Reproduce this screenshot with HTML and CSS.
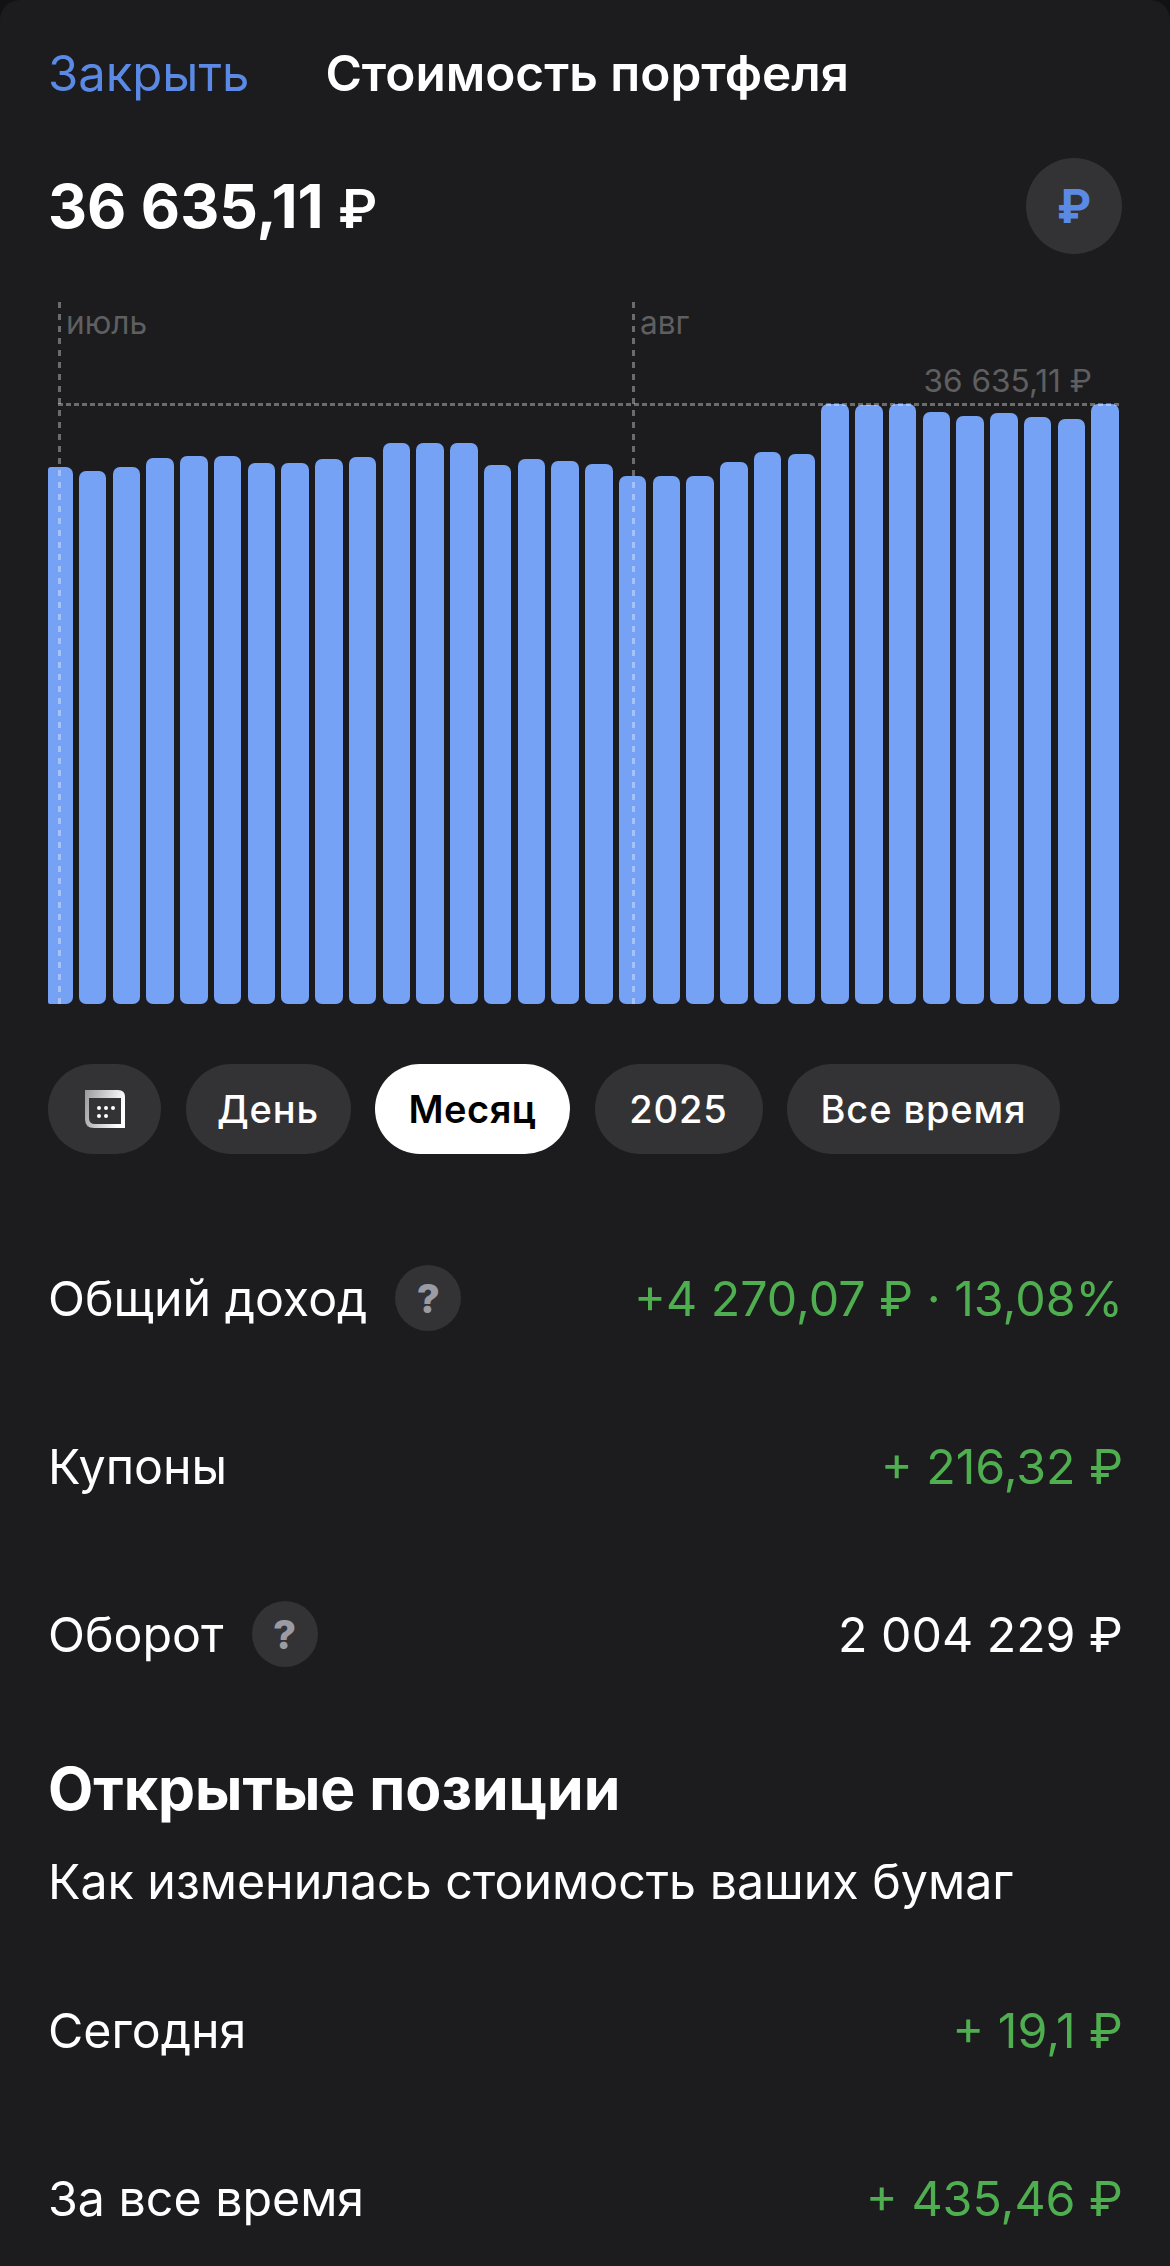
FILE: index.html
```html
<!DOCTYPE html>
<html lang="ru">
<head>
  <meta charset="UTF-8" />
  <title>Стоимость портфеля</title>
  <link rel="stylesheet" href="styles.css">
</head>
<body>
  <div class="sheet">
    <div class="topbar">
      <span class="close">Закрыть</span>
      <span class="title">Стоимость портфеля</span>
    </div>

    <div class="total">
      <span class="totalValue">36 635,11 <span class="totalSign">₽</span></span>
      <span class="currency">₽</span>
    </div>

    <div class="chart">
      <div class="bars">
        <div class="bar" style="height: 537px"></div>
        <div class="bar" style="height: 533px"></div>
        <div class="bar" style="height: 537px"></div>
        <div class="bar" style="height: 546px"></div>
        <div class="bar" style="height: 548px"></div>
        <div class="bar" style="height: 548px"></div>
        <div class="bar" style="height: 541px"></div>
        <div class="bar" style="height: 541px"></div>
        <div class="bar" style="height: 545px"></div>
        <div class="bar" style="height: 547px"></div>
        <div class="bar" style="height: 561px"></div>
        <div class="bar" style="height: 561px"></div>
        <div class="bar" style="height: 561px"></div>
        <div class="bar" style="height: 539px"></div>
        <div class="bar" style="height: 545px"></div>
        <div class="bar" style="height: 543px"></div>
        <div class="bar" style="height: 540px"></div>
        <div class="bar" style="height: 528px"></div>
        <div class="bar" style="height: 528px"></div>
        <div class="bar" style="height: 528px"></div>
        <div class="bar" style="height: 542px"></div>
        <div class="bar" style="height: 552px"></div>
        <div class="bar" style="height: 550px"></div>
        <div class="bar" style="height: 600px"></div>
        <div class="bar" style="height: 599px"></div>
        <div class="bar" style="height: 600px"></div>
        <div class="bar" style="height: 592px"></div>
        <div class="bar" style="height: 588px"></div>
        <div class="bar" style="height: 591px"></div>
        <div class="bar" style="height: 587px"></div>
        <div class="bar" style="height: 585px"></div>
        <div class="bar" style="height: 600px"></div>
      </div>
      <div class="monthLine monthJuly"><span>июль</span></div>
      <div class="monthLine monthAug"><span>авг</span></div>
      <div class="maxLine"></div>
      <div class="maxLabel">36 635,11 ₽</div>
    </div>

    <div class="periods">
      <div class="pill pillIcon">
        <svg width="40" height="38" viewBox="0 0 40 38">
          <defs>
            <linearGradient id="calTop" x1="0" y1="0" x2="1" y2="0.25">
              <stop offset="0" stop-color="#9a9a9c" />
              <stop offset="1" stop-color="#ffffff" />
            </linearGradient>
          </defs>
          <path d="M0 0H33Q40 0 40 7V38H9Q0 38 0 29Z" fill="url(#calTop)" />
          <path d="M4 8H36V34H10Q4 34 4 28Z" fill="#333335" />
          <circle cx="14" cy="18" r="2" fill="#fff" />
          <circle cx="21" cy="18" r="2" fill="#fff" />
          <circle cx="28" cy="18" r="2" fill="#fff" />
          <circle cx="14" cy="26" r="2" fill="#fff" />
          <circle cx="21" cy="26" r="2" fill="#fff" />
        </svg>
      </div>
      <div class="pill pillDay">День</div>
      <div class="pill pillActive">Месяц</div>
      <div class="pill pillYear">2025</div>
      <div class="pill pillAll">Все время</div>
    </div>

    <div class="row rowFirst">
      <div class="rowLabel">Общий доход <span class="help">?</span></div>
      <div class="rowValue green">+4 270,07 ₽ · 13,08%</div>
    </div>
    <div class="row">
      <div class="rowLabel">Купоны</div>
      <div class="rowValue green">+ 216,32 ₽</div>
    </div>
    <div class="row">
      <div class="rowLabel">Оборот <span class="help">?</span></div>
      <div class="rowValue">2 004 229 ₽</div>
    </div>

    <h2 class="sectionTitle">Открытые позиции</h2>
    <p class="sectionText">Как изменилась стоимость ваших бумаг</p>

    <div class="row rowToday">
      <div class="rowLabel">Сегодня</div>
      <div class="rowValue green">+ 19,1 ₽</div>
    </div>
    <div class="row">
      <div class="rowLabel">За все время</div>
      <div class="rowValue green">+ 435,46 ₽</div>
    </div>
  </div>
</body>
</html>
```

FILE: styles.css
```css
html, body {
  margin: 0;
  padding: 0;
  height: 2266px;
  overflow: hidden;
  background-color: #121214;
}
.sheet {
  box-sizing: border-box;
  height: 2266px;
  padding: 0 48px 0 48px;
  overflow: hidden;
  background-color: #1c1c1e;
  border-radius: 20px 20px 0 0;
  color: #ffffff;
  font-family: Inter, "Noto Sans", sans-serif;
}

/* Header */
.topbar {
  display: flex;
  align-items: center;
  gap: 76px;
  height: 56px;
  padding-top: 45px;
}
.close {
  font-size: 49px;
  color: #5a8ae6;
}
.title {
  font-size: 49.5px;
  font-weight: 600;
}
.total {
  display: flex;
  justify-content: space-between;
  align-items: center;
  height: 96px;
  margin-top: 57px;
}
.totalValue {
  font-size: 60.6px;
  font-weight: 700;
}
.totalSign {
  font-size: 54px;
  font-weight: 600;
}
.currency {
  display: flex;
  justify-content: center;
  align-items: center;
  width: 96px;
  height: 96px;
  border-radius: 50%;
  background-color: #333335;
  color: #5a8ae6;
  font-size: 46px;
  font-weight: 700;
}

/* Chart */
.chart {
  position: relative;
  height: 702px;
  margin-top: 48px;
  margin-right: 3px;
}
.bars {
  display: flex;
  align-items: flex-end;
  gap: 6.3px;
  height: 100%;
}
.bar {
  flex: 1;
  background-color: #76a2f5;
  border-radius: 7px;
}
.bar:first-child {
  flex: none;
  width: 24.7px;
  border-top-left-radius: 3px;
  border-bottom-left-radius: 2px;
}
.monthLine {
  position: absolute;
  top: 0;
  bottom: 0;
  width: 3px;
  background-image: repeating-linear-gradient(to bottom, rgba(255, 255, 255, 0.35) 0 6px, transparent 6px 12px);
}
.monthJuly {
  left: 10px;
}
.monthAug {
  left: 584px;
}
.monthLine span {
  position: absolute;
  top: 1px;
  left: 8px;
  font-size: 31.6px;
  color: #5f5f61;
}
.maxLine {
  position: absolute;
  top: 101px;
  left: 10px;
  right: 0;
  height: 3px;
  background-image: repeating-linear-gradient(to right, rgba(255, 255, 255, 0.35) 0 5px, transparent 5px 8px);
}
.maxLabel {
  position: absolute;
  top: 59px;
  right: 27px;
  font-size: 31.6px;
  color: #5f5f61;
}

/* Period pills */
.periods {
  display: flex;
  gap: 24.5px;
  margin-top: 60px;
}
.pill {
  display: flex;
  justify-content: center;
  align-items: center;
  box-sizing: border-box;
  height: 90px;
  border-radius: 45px;
  background-color: #333335;
  font-size: 38px;
  font-weight: 500;
  letter-spacing: 0.9px;
}
.pillIcon {
  width: 113px;
}
.pillDay {
  width: 165px;
}
.pillActive {
  width: 195px;
  background-color: #ffffff;
  color: #000000;
  font-weight: 600;
  letter-spacing: 0.5px;
}
.pillYear {
  width: 168px;
}
.pillAll {
  width: 273px;
}

/* Rows */
.row {
  display: flex;
  justify-content: space-between;
  align-items: center;
  height: 66px;
  margin-top: 102px;
  font-size: 48.3px;
}
.rowFirst {
  margin-top: 111px;
}
.rowToday {
  margin-top: 86px;
}
.rowLabel {
  display: flex;
  align-items: center;
  gap: 28px;
}
.rowValue {
  margin-right: -1px;
}
.help {
  display: flex;
  justify-content: center;
  align-items: center;
  width: 66px;
  height: 66px;
  border-radius: 50%;
  background-color: #333335;
  color: #9b9ca3;
  font-size: 40px;
  font-weight: 800;
}
.green {
  color: #4fae4f;
}
.sectionTitle {
  margin: 88px 0 0 0;
  font-size: 58.8px;
  font-weight: 700;
  line-height: 68px;
}
.sectionText {
  margin: 30px 0 0 0;
  font-size: 48.3px;
  line-height: 58px;
}
```
